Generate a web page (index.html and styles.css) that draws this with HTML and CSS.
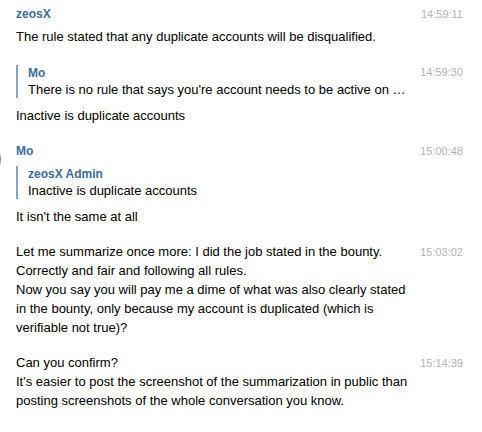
FILE: index.html
```html
<!DOCTYPE html>
<html>
<head>
<meta charset="utf-8">
<link rel="stylesheet" href="styles.css">
</head>
<body>
<div class="chat">
  <div class="msg">
    <div class="content">
      <div class="name">zeosX</div>
      <div class="text">The rule stated that any duplicate accounts will be disqualified.</div>
    </div>
    <div class="time">14:59:11</div>
  </div>
  <div class="msg">
    <div class="content">
      <div class="quote">
        <div class="qname">Mo</div>
        <div class="qtext">There is no rule that says you're account needs to be active on …</div>
      </div>
      <div class="text">Inactive is duplicate accounts</div>
    </div>
    <div class="time">14:59:30</div>
  </div>
  <div class="msg">
    <div class="avatar"></div>
    <div class="content">
      <div class="name">Mo</div>
      <div class="quote">
        <div class="qname">zeosX Admin</div>
        <div class="qtext">Inactive is duplicate accounts</div>
      </div>
      <div class="text">It isn't the same at all</div>
    </div>
    <div class="time">15:00:48</div>
  </div>
  <div class="msg">
    <div class="content">
      <div class="text">Let me summarize once more: I did the job stated in the bounty.<br>Correctly and fair and following all rules.<br>Now you say you will pay me a dime of what was also clearly stated in the bounty, only because my account is duplicated (which is verifiable not true)?</div>
    </div>
    <div class="time">15:03:02</div>
  </div>
  <div class="msg">
    <div class="content">
      <div class="text">Can you confirm?<br>It's easier to post the screenshot of the summarization in public than posting screenshots of the whole conversation you know.</div>
    </div>
    <div class="time">15:14:39</div>
  </div>
</div>
</body>
</html>
```
FILE: styles.css
```css
html, body {
  margin: 0;
  padding: 0;
  background: #ffffff;
}
body {
  font-family: "Liberation Sans", Arial, sans-serif;
  color: #000000;
  overflow: hidden;
}
.chat {
  padding: 4px 19px 0 16px;
}
.msg {
  display: flex;
  align-items: flex-start;
  position: relative;
}
.msg + .msg {
  margin-top: 16px;
}
.content {
  flex: 1;
  min-width: 0;
}
.name {
  font-size: 12px;
  font-weight: bold;
  line-height: 20px;
  color: #3a6d99;
}
.name + .text {
  margin-top: 3px;
}
.text {
  font-size: 13px;
  line-height: 19px;
}
.quote {
  border-left: 2px solid #7fa6cf;
  padding-left: 10px;
  margin: 3px 0 8px;
}
.name + .quote {
  margin-top: 5px;
}
.qname {
  font-size: 12px;
  font-weight: bold;
  line-height: 16px;
  color: #3a6d99;
}
.qtext {
  font-size: 13px;
  line-height: 17px;
  white-space: nowrap;
}
.time {
  flex: none;
  margin-left: 12px;
  font-size: 11px;
  line-height: 20px;
  color: #b3b3b3;
}
.avatar {
  position: absolute;
  left: -48px;
  top: 2px;
  width: 33px;
  height: 33px;
  border-radius: 50%;
  background: #8d9270;
}
```
